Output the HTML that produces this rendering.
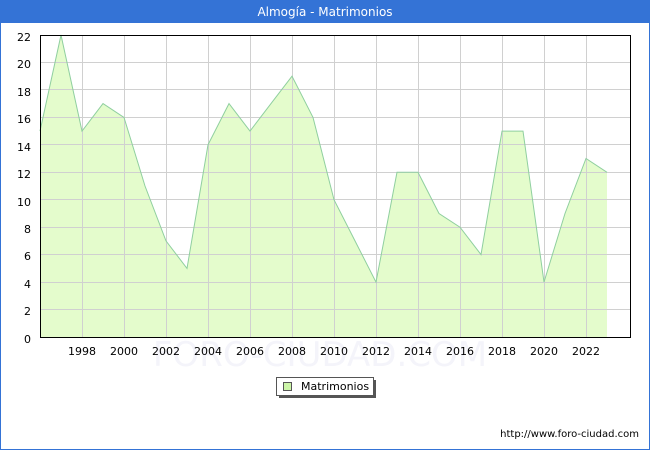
<!DOCTYPE html>
<html><head><meta charset="utf-8"><style>
body{margin:0;width:650px;height:450px;overflow:hidden;background:#fff;font-family:"DejaVu Sans","Liberation Sans",sans-serif}
</style></head><body>
<svg width="650" height="450" xmlns="http://www.w3.org/2000/svg" font-family="DejaVu Sans, Liberation Sans, sans-serif">
<rect x="0.5" y="0.5" width="649" height="449" fill="#fff" stroke="#3473d6"/>
<rect x="0" y="0" width="650" height="23" fill="#3473d6"/>
<text x="325" y="16" fill="#fff" font-size="12" text-anchor="middle">Almogía - Matrimonios</text>
<text x="320" y="366" fill="#f4f4fa" font-size="34" text-anchor="middle">FORO-CIUDAD.COM</text>
<polygon fill="#e4fccc" points="40,337 40,131.1 61,35 82,131.1 103,103.6 124,117.4 145,186 166,240.9 187,268.4 208,144.8 229,103.6 250,131.1 271,103.6 292,76.2 313,117.4 334,199.7 355,240.9 376,282.1 397,172.3 418,172.3 439,213.5 460,227.2 481,254.6 502,131.1 523,131.1 544,282.1 565,213.5 586,158.5 607,172.3 607,337"/>
<g stroke="#d0d0d0" stroke-width="1">
<line x1="82.5" y1="35" x2="82.5" y2="337"/><line x1="124.5" y1="35" x2="124.5" y2="337"/><line x1="166.5" y1="35" x2="166.5" y2="337"/><line x1="208.5" y1="35" x2="208.5" y2="337"/><line x1="250.5" y1="35" x2="250.5" y2="337"/><line x1="292.5" y1="35" x2="292.5" y2="337"/><line x1="334.5" y1="35" x2="334.5" y2="337"/><line x1="376.5" y1="35" x2="376.5" y2="337"/><line x1="418.5" y1="35" x2="418.5" y2="337"/><line x1="460.5" y1="35" x2="460.5" y2="337"/><line x1="502.5" y1="35" x2="502.5" y2="337"/><line x1="544.5" y1="35" x2="544.5" y2="337"/><line x1="586.5" y1="35" x2="586.5" y2="337"/>
<line x1="40" y1="62.5" x2="630" y2="62.5"/><line x1="40" y1="89.5" x2="630" y2="89.5"/><line x1="40" y1="117.5" x2="630" y2="117.5"/><line x1="40" y1="144.5" x2="630" y2="144.5"/><line x1="40" y1="172.5" x2="630" y2="172.5"/><line x1="40" y1="199.5" x2="630" y2="199.5"/><line x1="40" y1="227.5" x2="630" y2="227.5"/><line x1="40" y1="254.5" x2="630" y2="254.5"/><line x1="40" y1="282.5" x2="630" y2="282.5"/><line x1="40" y1="309.5" x2="630" y2="309.5"/>
</g>
<polyline fill="none" stroke="#8fcf9f" stroke-width="1" points="40,131.1 61,35 82,131.1 103,103.6 124,117.4 145,186 166,240.9 187,268.4 208,144.8 229,103.6 250,131.1 271,103.6 292,76.2 313,117.4 334,199.7 355,240.9 376,282.1 397,172.3 418,172.3 439,213.5 460,227.2 481,254.6 502,131.1 523,131.1 544,282.1 565,213.5 586,158.5 607,172.3"/>
<rect x="40.5" y="35.5" width="590" height="302" fill="none" stroke="#000"/>
<g font-size="11" fill="#000" text-anchor="end">
<text x="31" y="41">22</text><text x="31" y="68">20</text><text x="31" y="96">18</text><text x="31" y="123">16</text><text x="31" y="151">14</text><text x="31" y="178">12</text><text x="31" y="206">10</text><text x="31" y="233">8</text><text x="31" y="260">6</text><text x="31" y="288">4</text><text x="31" y="315">2</text><text x="31" y="343">0</text>
</g>
<g font-size="11" fill="#000" text-anchor="middle">
<text x="82" y="355">1998</text><text x="124" y="355">2000</text><text x="166" y="355">2002</text><text x="208" y="355">2004</text><text x="250" y="355">2006</text><text x="292" y="355">2008</text><text x="334" y="355">2010</text><text x="376" y="355">2012</text><text x="418" y="355">2014</text><text x="460" y="355">2016</text><text x="502" y="355">2018</text><text x="544" y="355">2020</text><text x="586" y="355">2022</text>
</g>
<rect x="279" y="380" width="97" height="18" fill="#555"/>
<rect x="276.5" y="377.5" width="97" height="18" fill="#fff" stroke="#555"/>
<rect x="283.5" y="382.5" width="8" height="8" fill="#ccf5a8" stroke="#555"/>
<text x="301" y="390" font-size="11" fill="#000">Matrimonios</text>
<text x="639" y="437" font-size="10" fill="#000" text-anchor="end">http://www.foro-ciudad.com</text>
</svg>
</body></html>
